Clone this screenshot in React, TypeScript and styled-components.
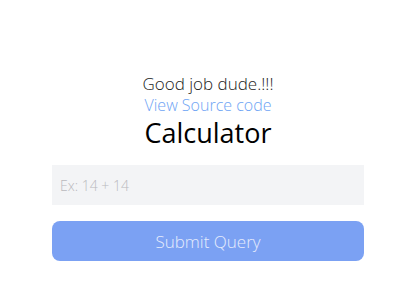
import styled, { createGlobalStyle } from "styled-components";

const GlobalStyle = createGlobalStyle`
  body {
    margin: 0;
    background: #ffffff;
    font-family: "Open Sans", "Noto Sans", sans-serif;
  }
`;

const Page = styled.main`
  display: flex;
  flex-direction: column;
  align-items: center;
  padding: 73px 0 0 22px;
`;

const Greeting = styled.p`
  margin: 0;
  font-size: 17px;
  font-weight: 300;
  line-height: 22px;
  color: #222222;
`;

const SourceLink = styled.a`
  font-size: 16px;
  font-weight: 300;
  line-height: 20px;
  color: #6ea4f4;
  text-decoration: none;
`;

const Title = styled.h1`
  margin: 0;
  font-size: 27px;
  font-weight: 400;
  line-height: 36px;
  color: #000000;
`;

const Form = styled.form`
  display: flex;
  flex-direction: column;
  gap: 16px;
  width: 312px;
  margin-top: 14px;
`;

const Input = styled.input`
  box-sizing: border-box;
  height: 40px;
  padding: 0 8px;
  border: none;
  outline: none;
  background: #f3f4f6;
  font-family: inherit;
  font-size: 14px;
  font-weight: 300;
  color: #333;

  &::placeholder {
    color: #b9b9bd;
  }
`;

const SubmitButton = styled.button`
  height: 40px;
  border: none;
  border-radius: 8px;
  background: #7ba1f3;
  color: #e6ecfc;
  font-family: inherit;
  font-size: 17px;
  font-weight: 300;
  cursor: pointer;
`;

export default function App() {
  return (
    <>
      <GlobalStyle />
      <Page>
        <Greeting>Good job dude.!!!</Greeting>
        <SourceLink href="#">View Source code</SourceLink>
        <Title>Calculator</Title>
        <Form onSubmit={(e) => e.preventDefault()}>
          <Input type="text" placeholder="Ex: 14 + 14" />
          <SubmitButton type="submit">Submit Query</SubmitButton>
        </Form>
      </Page>
    </>
  );
}
